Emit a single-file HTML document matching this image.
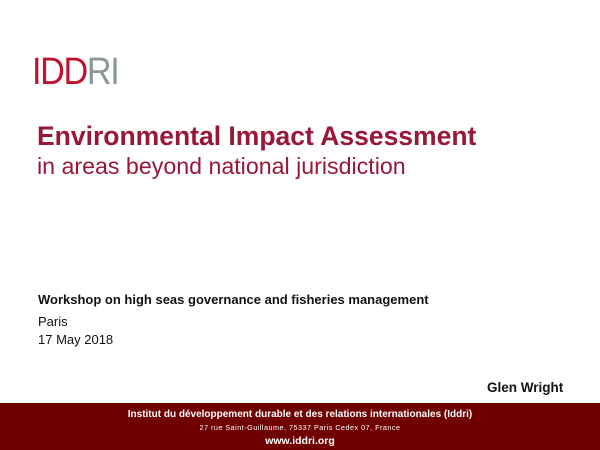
<!DOCTYPE html>
<html><head><meta charset="utf-8"><style>
html,body{margin:0;padding:0;width:600px;height:450px;overflow:hidden;background:#fff;font-family:"Liberation Sans",sans-serif;}
.a{position:absolute;white-space:nowrap;}
</style></head><body>
<div class="a" style="left:32px;top:53px;font-size:38px;line-height:38px;letter-spacing:-1.5px;font-weight:normal;transform:scaleX(0.9);transform-origin:left top;"><span style="color:#c1122c">IDD</span><span style="color:#8a9894">RI</span></div>
<div class="a" style="left:37px;top:121px;font-size:26.5px;line-height:30px;font-weight:bold;color:#98173a;">Environmental Impact Assessment</div>
<div class="a" style="left:37px;top:152px;font-size:23.2px;line-height:28px;color:#98173a;">in areas beyond national jurisdiction</div>
<div class="a" style="left:38px;top:292px;font-size:13px;line-height:16px;font-weight:bold;color:#111;letter-spacing:0px;">Workshop on high seas governance and fisheries management</div>
<div class="a" style="left:38px;top:314px;font-size:13px;line-height:16px;color:#111;">Paris</div>
<div class="a" style="left:38px;top:332px;font-size:13px;line-height:16px;color:#111;">17 May 2018</div>
<div class="a" style="left:487px;top:380px;font-size:13.5px;line-height:16px;font-weight:bold;color:#111;">Glen Wright</div>
<div class="a" style="left:0;top:403px;width:600px;height:47px;background:#700000;"></div>
<div class="a" style="left:0;top:408px;width:600px;text-align:center;font-size:10px;line-height:13px;font-weight:bold;color:#fff;">Institut du développement durable et des relations internationales (Iddri)</div>
<div class="a" style="left:0;top:423px;width:600px;text-align:center;font-size:7.2px;line-height:10px;color:#fff;letter-spacing:0.5px;">27 rue Saint-Guillaume, 75337 Paris Cedex 07, France</div>
<div class="a" style="left:0;top:435px;width:600px;text-align:center;font-size:10.5px;line-height:13px;font-weight:bold;color:#fff;">www.iddri.org</div>
</body></html>
